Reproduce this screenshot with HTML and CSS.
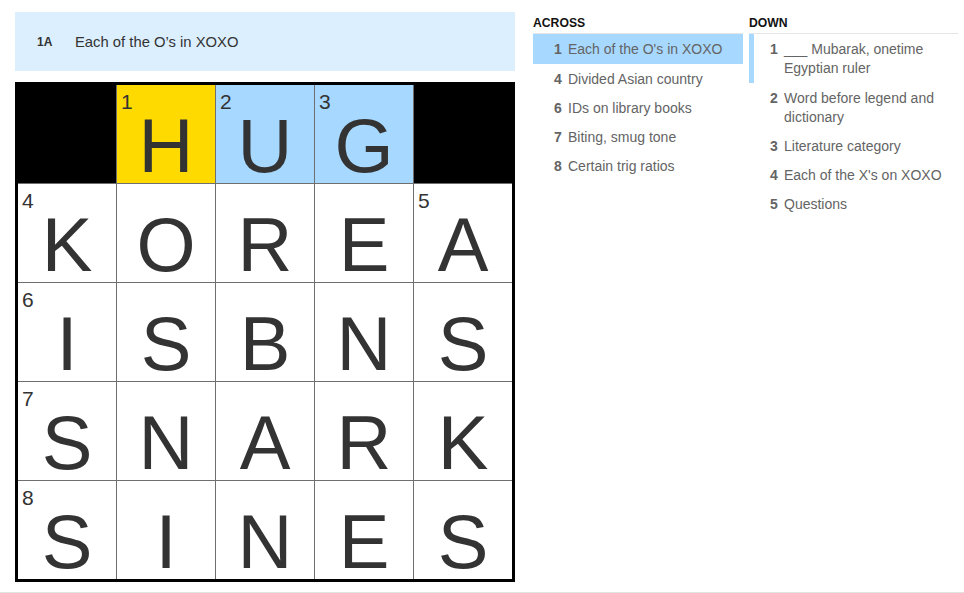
FILE: index.html
```html
<!DOCTYPE html>
<html lang="en">
<head>
<meta charset="utf-8">
<title>Mini Crossword</title>
<link rel="stylesheet" href="styles.css">
</head>
<body>
<div class="page">
  <section class="board">
    <div class="clue-bar">
      <span class="clue-bar-label">1A</span>
      <span class="clue-bar-text">Each of the O’s in XOXO</span>
    </div>
    <div class="grid">
      <div class="cell block"></div>
      <div class="cell selected"><span class="num">1</span><span class="letter">H</span></div>
      <div class="cell word"><span class="num">2</span><span class="letter">U</span></div>
      <div class="cell word"><span class="num">3</span><span class="letter">G</span></div>
      <div class="cell block"></div>

      <div class="cell"><span class="num">4</span><span class="letter">K</span></div>
      <div class="cell"><span class="letter">O</span></div>
      <div class="cell"><span class="letter">R</span></div>
      <div class="cell"><span class="letter">E</span></div>
      <div class="cell"><span class="num">5</span><span class="letter">A</span></div>

      <div class="cell"><span class="num">6</span><span class="letter">I</span></div>
      <div class="cell"><span class="letter">S</span></div>
      <div class="cell"><span class="letter">B</span></div>
      <div class="cell"><span class="letter">N</span></div>
      <div class="cell"><span class="letter">S</span></div>

      <div class="cell"><span class="num">7</span><span class="letter">S</span></div>
      <div class="cell"><span class="letter">N</span></div>
      <div class="cell"><span class="letter">A</span></div>
      <div class="cell"><span class="letter">R</span></div>
      <div class="cell"><span class="letter">K</span></div>

      <div class="cell"><span class="num">8</span><span class="letter">S</span></div>
      <div class="cell"><span class="letter">I</span></div>
      <div class="cell"><span class="letter">N</span></div>
      <div class="cell"><span class="letter">E</span></div>
      <div class="cell"><span class="letter">S</span></div>
    </div>
  </section>

  <section class="clues">
    <div class="clue-list across">
      <h3 class="clue-head">ACROSS</h3>
      <ol class="clue-items">
        <li class="clue active"><span class="clue-num">1</span><span class="clue-text">Each of the O's in XOXO</span></li>
        <li class="clue"><span class="clue-num">4</span><span class="clue-text">Divided Asian country</span></li>
        <li class="clue"><span class="clue-num">6</span><span class="clue-text">IDs on library books</span></li>
        <li class="clue"><span class="clue-num">7</span><span class="clue-text">Biting, smug tone</span></li>
        <li class="clue"><span class="clue-num">8</span><span class="clue-text">Certain trig ratios</span></li>
      </ol>
    </div>
    <div class="clue-list down">
      <h3 class="clue-head">DOWN</h3>
      <ol class="clue-items">
        <li class="clue related"><span class="clue-num">1</span><span class="clue-text">___ Mubarak, onetime Egyptian ruler</span></li>
        <li class="clue"><span class="clue-num">2</span><span class="clue-text">Word before legend and dictionary</span></li>
        <li class="clue"><span class="clue-num">3</span><span class="clue-text">Literature category</span></li>
        <li class="clue"><span class="clue-num">4</span><span class="clue-text">Each of the X's on XOXO</span></li>
        <li class="clue"><span class="clue-num">5</span><span class="clue-text">Questions</span></li>
      </ol>
    </div>
  </section>
</div>
</body>
</html>
```

FILE: styles.css
```css
* { box-sizing: border-box; }

html, body {
  margin: 0;
  padding: 0;
  background: #fff;
  font-family: "Liberation Sans", Arial, sans-serif;
}

.page {
  display: flex;
  align-items: flex-start;
  gap: 18px;
  height: 593px;
  padding: 12px 0 0 15px;
  border-bottom: 1px solid #e2e2e2;
}

.board {
  width: 500px;
  flex: 0 0 500px;
}

.clue-bar {
  height: 59px;
  background: #dcefff;
  display: flex;
  align-items: center;
  padding-left: 22px;
  color: #333;
}

.clue-bar-label {
  width: 38px;
  flex: 0 0 38px;
  font-size: 12px;
  font-weight: bold;
}

.clue-bar-text {
  font-size: 14.8px;
}

.grid {
  margin-top: 11px;
  width: 500px;
  height: 500px;
  border: 3px solid #000;
  background: #6f6f6f;
  display: grid;
  grid-template-columns: repeat(5, 1fr);
  grid-template-rows: repeat(5, 1fr);
  gap: 1px;
}

.cell {
  position: relative;
  background: #fff;
  display: flex;
  justify-content: center;
  align-items: flex-end;
  color: #333;
}

.cell.block { background: #000; }
.cell.selected { background: #ffda00; }
.cell.word { background: #a7d8ff; }

.num {
  position: absolute;
  top: 6px;
  left: 4px;
  font-size: 21px;
  line-height: 1;
}

.letter {
  font-size: 76px;
  line-height: 1;
  margin-bottom: -1px;
}

.clues {
  display: flex;
  gap: 6px;
}

.clue-list.across { width: 210px; }
.clue-list.down { width: 209px; }

.clue-head {
  margin: 0;
  height: 22px;
  padding-top: 2px;
  line-height: 19px;
  font-size: 12.2px;
  font-weight: bold;
  color: #121212;
  border-bottom: 1px solid #e6e6e6;
}

.clue-items {
  list-style: none;
  margin: 0;
  padding: 0;
}

.clue {
  display: flex;
  padding: 6px 4px 4px 16px;
  border-left: 5px solid transparent;
  font-size: 14px;
  line-height: 19px;
  color: #646464;
}

.clue.active {
  background: #a7d8ff;
  border-left-color: #a7d8ff;
  padding-bottom: 5px;
}

.clue.related {
  border-left-color: #a7d8ff;
  padding-bottom: 5px;
}

.clue-num {
  flex: 0 0 14px;
  font-weight: bold;
}

.clue-text {
  flex: 1 1 auto;
}
```
